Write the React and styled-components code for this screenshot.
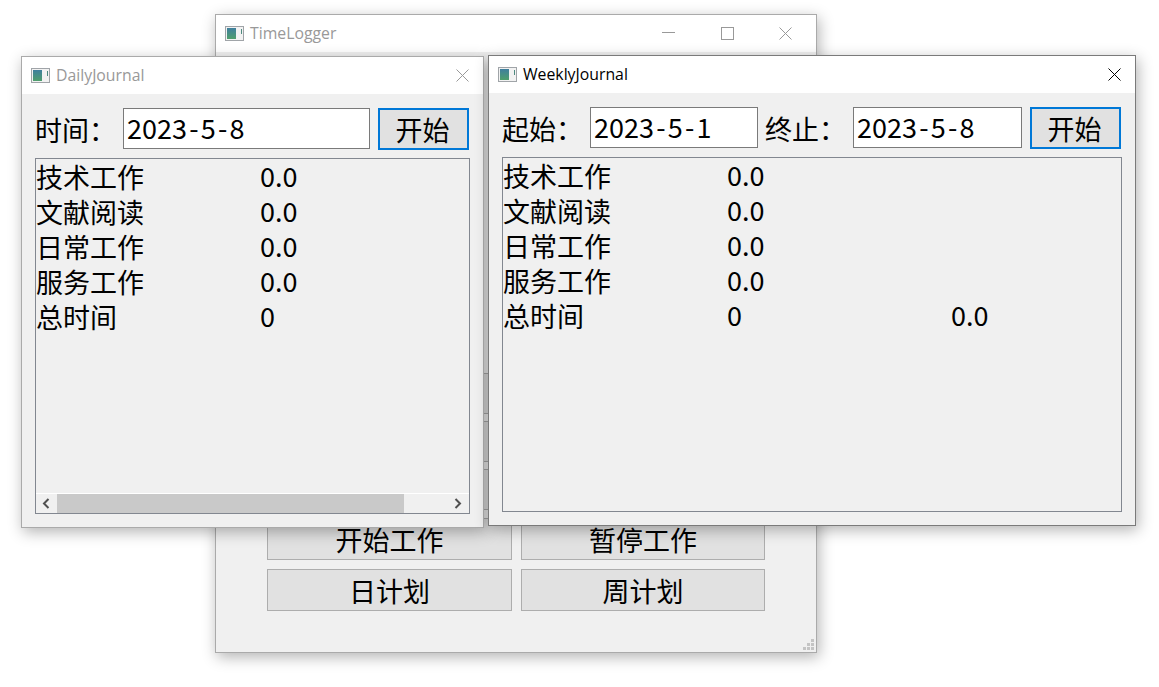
import React from 'react';
import styled, { createGlobalStyle } from 'styled-components';

const GlobalStyle = createGlobalStyle`
  html, body {
    margin: 0;
    padding: 0;
    background: #ffffff;
  }
  * {
    box-sizing: border-box;
  }
`;

const CJK = `"Noto Sans CJK SC", "Noto Sans", sans-serif`;

const Desktop = styled.div`
  position: relative;
  width: 1159px;
  height: 687px;
  overflow: hidden;
  background: #ffffff;
  font-family: ${CJK};
  color: #000000;
`;

const Window = styled.div`
  position: absolute;
  left: ${p => p.$x}px;
  top: ${p => p.$y}px;
  width: ${p => p.$w}px;
  height: ${p => p.$h}px;
  display: flex;
  flex-direction: column;
  background: #f0f0f0;
  border: 1px solid ${p => (p.$active ? '#7a7a7a' : '#aaaaaa')};
  box-shadow: 2px 4px 14px rgba(0, 0, 0, 0.3);
`;

const TitleBar = styled.div`
  height: 37px;
  flex: none;
  display: flex;
  align-items: center;
  padding-left: 9px;
  background: #ffffff;
`;

const TitleText = styled.span`
  margin-left: 6px;
  padding-bottom: 2px;
  font-family: "Open Sans", "Noto Sans", sans-serif;
  font-size: 15.8px;
  color: ${p => (p.$active ? '#000000' : '#999999')};
`;

const TitleButtons = styled.div`
  margin-left: auto;
  padding-right: ${p => p.$pr || 0}px;
  display: flex;
`;

const CaptionButton = styled.div`
  width: ${p => p.$w}px;
  height: 37px;
  display: flex;
  align-items: center;
  justify-content: center;
`;

const AppIconSvg = styled.svg`
  flex: none;
  display: block;
`;

const AppIcon = () => (
  <AppIconSvg width="19" height="15" viewBox="0 0 19 15">
    <defs>
      <linearGradient id="appicon" x1="0" y1="0" x2="0" y2="1">
        <stop offset="0" stopColor="#3f7f9e" />
        <stop offset="1" stopColor="#4f9f6c" />
      </linearGradient>
    </defs>
    <rect x="0.5" y="0.5" width="18" height="14" fill="#f2f2f2" stroke="#a0a4a8" />
    <rect x="2" y="2" width="9" height="11" fill="url(#appicon)" />
    <rect x="16" y="3" width="1" height="5" fill="#4f8a80" />
  </AppIconSvg>
);

const CloseIcon = ({ color }) => (
  <svg width="13" height="13" viewBox="0 0 13 13" fill="none" stroke={color} strokeWidth="1">
    <path d="M0.5 0.5 L12.5 12.5 M12.5 0.5 L0.5 12.5" />
  </svg>
);

const MinIcon = ({ color }) => (
  <svg width="13" height="13" viewBox="0 0 13 13" fill="none" stroke={color} strokeWidth="1">
    <path d="M0 5.5 H13" />
  </svg>
);

const MaxIcon = ({ color }) => (
  <svg width="13" height="13" viewBox="0 0 13 13" fill="none" stroke={color} strokeWidth="1">
    <rect x="0.5" y="0.5" width="12" height="12" />
  </svg>
);

const ButtonGrid = styled.div`
  display: grid;
  grid-template-columns: 245px 244px;
  column-gap: 9px;
  row-gap: 7px;
  padding: 321px 0 0 51px;
`;

const MainButton = styled.div`
  display: flex;
  align-items: center;
  justify-content: center;
  height: ${p => (p.$tall ? '42px' : '41px')};
  margin-top: ${p => (p.$shift ? '1px' : '0')};
  background: #e1e1e1;
  border: 1px solid #adadad;
  font-size: 27px;
  line-height: 1;
`;

const BottomRow = styled.div`
  grid-column: 1 / 3;
  display: grid;
  grid-template-columns: 245px 244px;
  column-gap: 9px;
  margin-top: 2px;
`;

const SizeGrip = styled.svg`
  position: absolute;
  right: 2px;
  bottom: 2px;
`;

const JournalBody = styled.div`
  flex: 1;
  min-height: 0;
  display: flex;
  flex-direction: column;
  padding: 14px 13px 13px 13px;
`;

const Toolbar = styled.div`
  display: flex;
  align-items: flex-start;
  height: 42px;
  margin-bottom: 8px;
  flex: none;
`;

const FieldLabel = styled.span`
  flex: none;
  width: ${p => p.$w}px;
  margin-left: ${p => p.$ml || 0}px;
  height: 42px;
  display: flex;
  align-items: center;
  padding-top: 1px;
  font-size: 27px;
  line-height: 1;
  white-space: nowrap;
`;

const DateInput = styled.div`
  flex: none;
  width: ${p => p.$w}px;
  height: 41px;
  display: flex;
  align-items: center;
  padding: 0 0 2px 3px;
  background: #ffffff;
  border: 1px solid #7a7a7a;
  font-size: 27px;
  line-height: 1;
`;

const Dash = styled.span`
  padding: 0 2.2px;
`;

const DateText = ({ value }) => {
  const [y, m, d] = value.split('-');
  return <span>{y}<Dash>-</Dash>{m}<Dash>-</Dash>{d}</span>;
};

const StartButton = styled.div`
  flex: none;
  margin-left: ${p => p.$ml}px;
  width: 91px;
  height: 42px;
  display: flex;
  align-items: center;
  justify-content: center;
  padding-right: 2px;
  background: #e1e1e1;
  border: 2px solid #0078d7;
  font-size: 27px;
  line-height: 1;
`;

const ReportPanel = styled.div`
  flex: 1;
  min-height: 0;
  position: relative;
  background: #f0f0f0;
  border: 1px solid #828790;
`;

const ReportRow = styled.div`
  display: flex;
  height: 35px;
  align-items: center;
  font-size: 27px;
  line-height: 1;
  white-space: nowrap;
`;

const ReportCell = styled.span`
  flex: none;
  width: 224px;
  padding-bottom: ${p => (p.$value ? '2px' : '0')};
`;

const ScrollBar = styled.div`
  position: absolute;
  left: 0;
  right: 0;
  bottom: 0;
  height: 20px;
  display: flex;
  align-items: center;
  background: #f0f0f0;
  border-top: 1px solid #ffffff;
`;

const ScrollArrow = styled.div`
  flex: none;
  width: 21px;
  height: 19px;
  padding-right: 2px;
  display: flex;
  align-items: center;
  justify-content: center;
`;

const ScrollTrack = styled.div`
  flex: 1;
  height: 19px;
`;

const ScrollThumb = styled.div`
  height: 19px;
  width: 347px;
  background: #c9c9c9;
`;

const ChevronIcon = ({ dir }) => (
  <svg width="8" height="11" viewBox="0 0 8 11" fill="none" stroke="#505050" strokeWidth="2">
    <path d={dir === 'left' ? 'M6.5 1 L2 5.5 L6.5 10' : 'M1.5 1 L6 5.5 L1.5 10'} />
  </svg>
);

const rows = [
  ['技术工作', '0.0'],
  ['文献阅读', '0.0'],
  ['日常工作', '0.0'],
  ['服务工作', '0.0'],
];

const Report = ({ total }) => (
  <>
    {rows.map(([name, value]) => (
      <ReportRow key={name}>
        <ReportCell>{name}</ReportCell>
        <ReportCell $value>{value}</ReportCell>
      </ReportRow>
    ))}
    <ReportRow>
      <ReportCell>总时间</ReportCell>
      <ReportCell $value>0</ReportCell>
      {total && <ReportCell $value>{total}</ReportCell>}
    </ReportRow>
  </>
);

const gripDots = [[8, 0], [8, 4], [4, 4], [8, 8], [4, 8], [0, 8]];

export default function App() {
  return (
    <Desktop>
      <GlobalStyle />

      <Window $x={215} $y={14} $w={602} $h={639}>
        <TitleBar>
          <AppIcon />
          <TitleText>TimeLogger</TitleText>
          <TitleButtons $pr={1}>
            <CaptionButton $w={58.5}><MinIcon color="#999999" /></CaptionButton>
            <CaptionButton $w={58.5}><MaxIcon color="#999999" /></CaptionButton>
            <CaptionButton $w={58.5}><CloseIcon color="#999999" /></CaptionButton>
          </TitleButtons>
        </TitleBar>
        <ButtonGrid>
          <MainButton />
          <MainButton />
          <MainButton />
          <MainButton />
          <MainButton />
          <MainButton />
          <MainButton $tall $shift>开始工作</MainButton>
          <MainButton $tall $shift>暂停工作</MainButton>
          <BottomRow>
            <MainButton $tall>日计划</MainButton>
            <MainButton $tall>周计划</MainButton>
          </BottomRow>
        </ButtonGrid>
        <SizeGrip width="11" height="11" viewBox="0 0 11 11" fill="#c4c4c4">
          {gripDots.map(([x, y]) => (
            <rect key={`${x}-${y}`} x={x} y={y} width="3" height="3" />
          ))}
        </SizeGrip>
      </Window>

      <Window $x={21} $y={56} $w={463} $h={472}>
        <TitleBar>
          <AppIcon />
          <TitleText>DailyJournal</TitleText>
          <TitleButtons>
            <CaptionButton $w={42}><CloseIcon color="#999999" /></CaptionButton>
          </TitleButtons>
        </TitleBar>
        <JournalBody>
          <Toolbar>
            <FieldLabel $w={88}>时间：</FieldLabel>
            <DateInput $w={247}><DateText value="2023-5-8" /></DateInput>
            <StartButton $ml={8}>开始</StartButton>
          </Toolbar>
          <ReportPanel>
            <Report />
            <ScrollBar>
              <ScrollArrow><ChevronIcon dir="left" /></ScrollArrow>
              <ScrollTrack><ScrollThumb /></ScrollTrack>
              <ScrollArrow><ChevronIcon dir="right" /></ScrollArrow>
            </ScrollBar>
          </ReportPanel>
        </JournalBody>
      </Window>

      <Window $x={488} $y={55} $w={648} $h={471} $active>
        <TitleBar>
          <AppIcon />
          <TitleText $active>WeeklyJournal</TitleText>
          <TitleButtons>
            <CaptionButton $w={42}><CloseIcon color="#000000" /></CaptionButton>
          </TitleButtons>
        </TitleBar>
        <JournalBody>
          <Toolbar>
            <FieldLabel $w={88}>起始：</FieldLabel>
            <DateInput $w={168}><DateText value="2023-5-1" /></DateInput>
            <FieldLabel $w={88} $ml={7}>终止：</FieldLabel>
            <DateInput $w={169}><DateText value="2023-5-8" /></DateInput>
            <StartButton $ml={8}>开始</StartButton>
          </Toolbar>
          <ReportPanel>
            <Report total="0.0" />
          </ReportPanel>
        </JournalBody>
      </Window>
    </Desktop>
  );
}
